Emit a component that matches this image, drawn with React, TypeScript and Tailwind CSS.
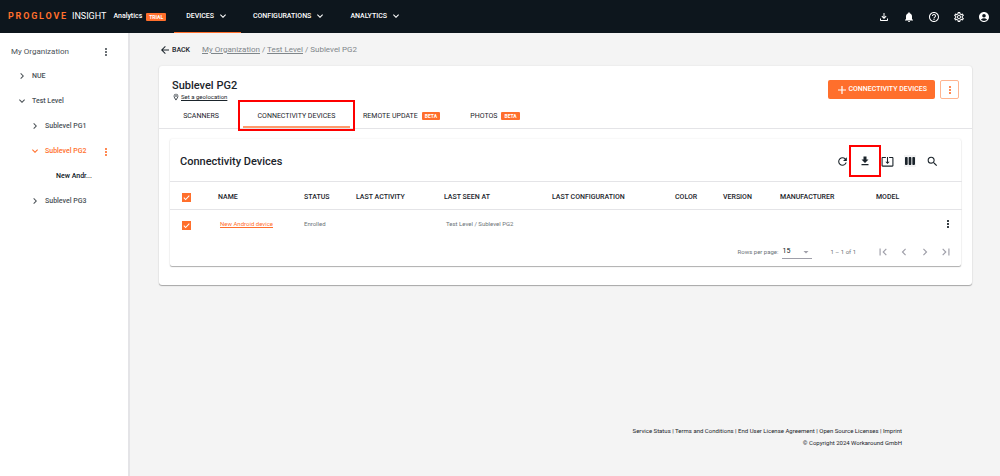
import { useState } from 'react'
import type { InputHTMLAttributes, ReactNode } from 'react'
import {
  MdAccountCircle,
  MdArrowBack,
  MdArrowDropDown,
  MdChevronLeft,
  MdChevronRight,
  MdExpandMore,
  MdFirstPage,
  MdHelpOutline,
  MdLastPage,
  MdMoreVert,
  MdNotifications,
  MdOutlineFileDownload,
  MdOutlineLocationOn,
  MdOutlineSettings,
  MdRefresh,
  MdSearch,
  MdViewWeek,
} from 'react-icons/md'

const NAV = [
  { label: 'DEVICES', active: true },
  { label: 'CONFIGURATIONS', active: false },
  { label: 'ANALYTICS', active: false },
]

const HEADER_ACTIONS: { label: string; icon: ReactNode }[] = [
  { label: 'Downloads', icon: <MdOutlineFileDownload className="h-3 w-3" /> },
  { label: 'Notifications', icon: <MdNotifications className="h-3 w-3" /> },
  { label: 'Help', icon: <MdHelpOutline className="h-3 w-3" /> },
  { label: 'Settings', icon: <MdOutlineSettings className="h-3 w-3" /> },
  { label: 'Account', icon: <MdAccountCircle className="h-3 w-3" /> },
]

const TREE: { label: string; state: 'open' | 'closed' | 'leaf'; indent: string; selected?: boolean }[] = [
  { label: 'NUE', state: 'closed', indent: 'pl-4' },
  { label: 'Test Level', state: 'open', indent: 'pl-4' },
  { label: 'Sublevel PG1', state: 'closed', indent: 'pl-[29px]' },
  { label: 'Sublevel PG2', state: 'open', indent: 'pl-[29px]', selected: true },
  { label: 'New Andr...', state: 'leaf', indent: 'pl-14' },
  { label: 'Sublevel PG3', state: 'closed', indent: 'pl-[29px]' },
]

const TABS = [
  { label: 'SCANNERS', beta: false, width: 'min-w-[84px]' },
  { label: 'CONNECTIVITY DEVICES', beta: false, width: 'min-w-[107px]' },
  { label: 'REMOTE UPDATE', beta: true, width: 'min-w-[103px]' },
  { label: 'PHOTOS', beta: true, width: 'min-w-[84px]' },
]

const COLUMNS = [
  { label: 'NAME', width: 'w-[86px]' },
  { label: 'STATUS', width: 'w-[52px]' },
  { label: 'LAST ACTIVITY', width: 'w-[88px]' },
  { label: 'LAST SEEN AT', width: 'w-[108px]' },
  { label: 'LAST CONFIGURATION', width: 'w-[123px]' },
  { label: 'COLOR', width: 'w-[48px]' },
  { label: 'VERSION', width: 'w-[57px]' },
  { label: 'MANUFACTURER', width: 'w-[96px]' },
  { label: 'MODEL', width: 'w-[60px]' },
]

const FOOTER_LINKS = [
  'Service Status',
  'Terms and Conditions',
  'End User License Agreement',
  'Open Source Licenses',
  'Imprint',
]

function Badge({ children }: { children: ReactNode }) {
  return (
    <span className="rounded-[1px] bg-[#ff6f2c] px-[3px] text-[5px] leading-2 font-bold text-white">{children}</span>
  )
}

function Checkbox(props: InputHTMLAttributes<HTMLInputElement>) {
  return (
    <span className="relative mt-1 flex h-[9px] w-[9px]">
      <input
        type="checkbox"
        className="peer h-[9px] w-[9px] appearance-none border border-zinc-500 checked:border-[#ff6f2c] checked:bg-[#ff6f2c]"
        {...props}
      />
      <svg
        viewBox="0 0 8 8"
        className="pointer-events-none absolute inset-0 hidden h-[9px] w-[9px] fill-none stroke-white peer-checked:block"
      >
        <path d="M1.6 4.2l1.6 1.6 3.3-3.5" strokeWidth="0.9" />
      </svg>
    </span>
  )
}

function Header() {
  return (
    <header className="flex h-[33px] shrink-0 items-stretch bg-[#0d161d] text-white">
      <a href="#" className="flex items-center pr-2 pl-2">
        <span className="text-[9px] font-bold tracking-[0.2em] text-[#ff6f2c]">PROGLOVE</span>
        <span className="ml-1 text-[9px]">INSIGHT</span>
        <span className="mr-1 ml-[7px] text-[7px] font-medium">Analytics</span>
        <Badge>TRIAL</Badge>
      </a>
      <nav className="flex">
        {NAV.map((item) => (
          <button
            key={item.label}
            className={`flex items-center gap-[3px] border-b px-3 text-[7px] font-medium ${
              item.active ? 'border-[#ff6f2c]' : 'border-transparent'
            }`}
          >
            {item.label}
            <MdExpandMore className="h-3 w-3" />
          </button>
        ))}
      </nav>
      <div className="mr-[9px] ml-auto flex items-center gap-[11px]">
        {HEADER_ACTIONS.map((action) => (
          <button key={action.label} aria-label={action.label} className="p-px">
            {action.icon}
          </button>
        ))}
      </div>
    </header>
  )
}

function Sidebar() {
  return (
    <aside className="w-[130px] shrink-0 border-r-2 border-zinc-200 bg-white pt-1.5 text-[7px] text-[#4b5257]">
      <div className="flex h-[25px] items-center justify-between pr-4 pl-[11px] text-[8px]">
        My Organization
        <button aria-label="Organization menu">
          <MdMoreVert className="h-3 w-3" />
        </button>
      </div>
      <ul>
        {TREE.map((node) => (
          <li
            key={node.label}
            className={`flex h-[25px] items-center pr-4 font-medium ${node.indent} ${
              node.selected ? 'text-[#ff6f2c]' : ''
            } ${node.state === 'leaf' ? 'text-[#0d161d]' : ''}`}
          >
            {node.state !== 'leaf' && (
              <button aria-label={`Toggle ${node.label}`} className="mr-1 pb-0.5">
                {node.state === 'open' ? <MdExpandMore className="h-3 w-3" /> : <MdChevronRight className="h-3 w-3" />}
              </button>
            )}
            <a href="#">{node.label}</a>
            {node.selected && (
              <button aria-label={`${node.label} menu`} className="ml-auto">
                <MdMoreVert className="h-3 w-3" />
              </button>
            )}
          </li>
        ))}
      </ul>
    </aside>
  )
}

function DevicesTable() {
  const [selected, setSelected] = useState(true)

  return (
    <section className="mx-[11px] mt-2.5 rounded-[2px] bg-white shadow-[0_1px_1px_rgba(0,0,0,0.3),0_0_2px_rgba(0,0,0,0.1)]">
      <div className="flex h-[42px] items-center justify-between pt-0.5 pr-[22px] pl-2.5">
        <h2 className="pt-0.5 text-[11px] font-medium">Connectivity Devices</h2>
        <div className="flex items-center gap-2.5">
          <button aria-label="Refresh">
            <MdRefresh className="h-[13px] w-[13px]" />
          </button>
          <button aria-label="Download" className="relative">
            <svg viewBox="0 0 24 24" className="h-3 w-3 fill-current">
              <path d="M19 9h-4V3H9v6H5l7 7 7-7zM5 18v2.5h14V18H5z" />
            </svg>
            <span className="pointer-events-none absolute -inset-2.5 border-2 border-[#fe0000]" />
          </button>
          <button aria-label="Import">
            <svg viewBox="0 0 24 24" className="h-[13px] w-[13px] fill-current">
              <path d="M12 16.5l4-4h-3v-9h-2v9H8l4 4zm9-13h-6v2h6v14H3v-14h6v-2H3c-1.100 0-2 .9-2 2v14c0 1.100.9 2 2 2h18c1.100 0 2-.9 2-2v-14c0-1.100-.9-2-2-2z" />
            </svg>
          </button>
          <button aria-label="Columns" className="bg-zinc-100">
            <MdViewWeek className="h-3 w-3" />
          </button>
          <button aria-label="Search">
            <MdSearch className="h-[13px] w-[13px]" />
          </button>
        </div>
      </div>

      <table className="w-full table-fixed border-collapse text-left text-[7px]">
        <thead>
          <tr className="h-7 border-y border-zinc-200">
            <th className="w-12 pl-3">
              <Checkbox aria-label="Select all" checked={selected} onChange={(e) => setSelected(e.target.checked)} />
            </th>
            {COLUMNS.map((col) => (
              <th key={col.label} className={`pt-1 font-medium whitespace-nowrap ${col.width}`}>
                {col.label}
              </th>
            ))}
            <th className="w-[26px]" />
          </tr>
        </thead>
        <tbody>
          <tr className="h-7 text-[6px] text-[#6c7378]">
            <td className="pl-3">
              <Checkbox
                aria-label="Select New Android device"
                checked={selected}
                onChange={(e) => setSelected(e.target.checked)}
              />
            </td>
            <td className="pl-0.5">
              <a href="#" className="text-[#ff6f2c] underline">
                New Android device
              </a>
            </td>
            <td>Enrolled</td>
            <td />
            <td className="pl-0.5 whitespace-nowrap">Test Level / Sublevel PG2</td>
            <td />
            <td />
            <td />
            <td />
            <td />
            <td>
              <button aria-label="Device menu" className="flex p-1.5 text-[#0d161d]">
                <MdMoreVert className="h-3 w-3" />
              </button>
            </td>
          </tr>
        </tbody>
      </table>

      <div className="flex h-7 items-center justify-end pr-2 text-[6px] text-[#6c7378]">
        <label htmlFor="page-size">Rows per page:</label>
        <span className="relative ml-1 flex h-3.5 w-[30px] border-b border-zinc-400 text-[7px] text-[#0d161d]">
          <select id="page-size" defaultValue="15" className="w-full appearance-none bg-transparent outline-none">
            <option>15</option>
            <option>30</option>
            <option>50</option>
          </select>
          <MdArrowDropDown className="pointer-events-none absolute top-px right-0 h-3 w-3 text-zinc-400" />
        </span>
        <span className="mr-5 ml-[18px]">1 – 1 of 1</span>
        <div className="flex gap-[7px] text-zinc-400">
          <button aria-label="First page">
            <MdFirstPage className="h-3.5 w-3.5" />
          </button>
          <button aria-label="Previous page">
            <MdChevronLeft className="h-3.5 w-3.5" />
          </button>
          <button aria-label="Next page">
            <MdChevronRight className="h-3.5 w-3.5" />
          </button>
          <button aria-label="Last page">
            <MdLastPage className="h-3.5 w-3.5" />
          </button>
        </div>
      </div>
    </section>
  )
}

export default function App() {
  const [tab, setTab] = useState('CONNECTIVITY DEVICES')

  return (
    <div className="flex min-h-screen flex-col bg-[#f4f4f4] font-[Roboto,sans-serif] text-[#1b242b]">
      <Header />
      <div className="flex grow">
        <Sidebar />
        <main className="flex min-w-0 grow flex-col pr-7 pl-[29px]">
          <div className="flex h-[33px] items-center pt-px">
            <button className="flex items-center text-[7px] font-medium">
              <MdArrowBack className="mr-px h-3 w-3" />
              BACK
            </button>
            <nav aria-label="Breadcrumb" className="ml-3 text-[8px] text-[#7f868a]">
              <a href="#" className="underline">
                My Organization
              </a>
              {' / '}
              <a href="#" className="underline">
                Test Level
              </a>
              {' / '}
              Sublevel PG2
            </nav>
          </div>

          <div className="rounded-[3px] bg-white pb-[19px] shadow-[0_1px_1px_rgba(0,0,0,0.3),0_0_2px_rgba(0,0,0,0.1)]">
            <div className="flex items-start justify-between px-[13px] pt-[13px]">
              <div>
                <h1 className="text-[11px] leading-[13px] font-medium">Sublevel PG2</h1>
                <a href="#" className="flex items-center text-[6px] leading-[10px]">
                  <MdOutlineLocationOn className="mr-px h-2 w-2" />
                  <span className="underline">Set a geolocation</span>
                </a>
              </div>
              <div className="flex gap-[5px] pt-px">
                <button className="flex h-[19px] items-center rounded-[2px] bg-[#ff6f2c] px-2 text-[7px] font-medium text-white">
                  <svg viewBox="0 0 12 12" className="h-3 w-3 stroke-white">
                    <path d="M6 2v8M2 6h8" strokeWidth="1.2" />
                  </svg>
                  CONNECTIVITY DEVICES
                </button>
                <button
                  aria-label="More actions"
                  className="flex h-[19px] w-[19px] items-center justify-center rounded-[2px] border border-[#ffb48f] text-[#ff6f2c]"
                >
                  <MdMoreVert className="h-3 w-3" />
                </button>
              </div>
            </div>

            <div role="tablist" className="flex h-[27px] border-b border-zinc-200">
              {TABS.map((item) => (
                <button
                  key={item.label}
                  role="tab"
                  aria-selected={tab === item.label}
                  onClick={() => setTab(item.label)}
                  className={`relative flex items-center justify-center gap-1 border-b-2 px-3 pt-1 text-[7px] ${item.width} ${
                    tab === item.label ? 'border-[#ff9a6b]' : 'border-transparent'
                  }`}
                >
                  {item.label}
                  {item.beta && <Badge>BETA</Badge>}
                  {item.label === 'CONNECTIVITY DEVICES' && (
                    <span className="pointer-events-none absolute -inset-x-[5px] -top-0.5 -bottom-[5px] border-2 border-[#fe0000]" />
                  )}
                </button>
              ))}
            </div>

            <DevicesTable />
          </div>

          <footer className="mt-auto pr-[70px] pb-[27px] text-right text-[6px] leading-3">
            <p>
              {FOOTER_LINKS.map((link, i) => (
                <span key={link}>
                  {i > 0 && ' | '}
                  <a href="#">{link}</a>
                </span>
              ))}
            </p>
            <p>© Copyright 2024 Workaround GmbH</p>
          </footer>
        </main>
      </div>
    </div>
  )
}
